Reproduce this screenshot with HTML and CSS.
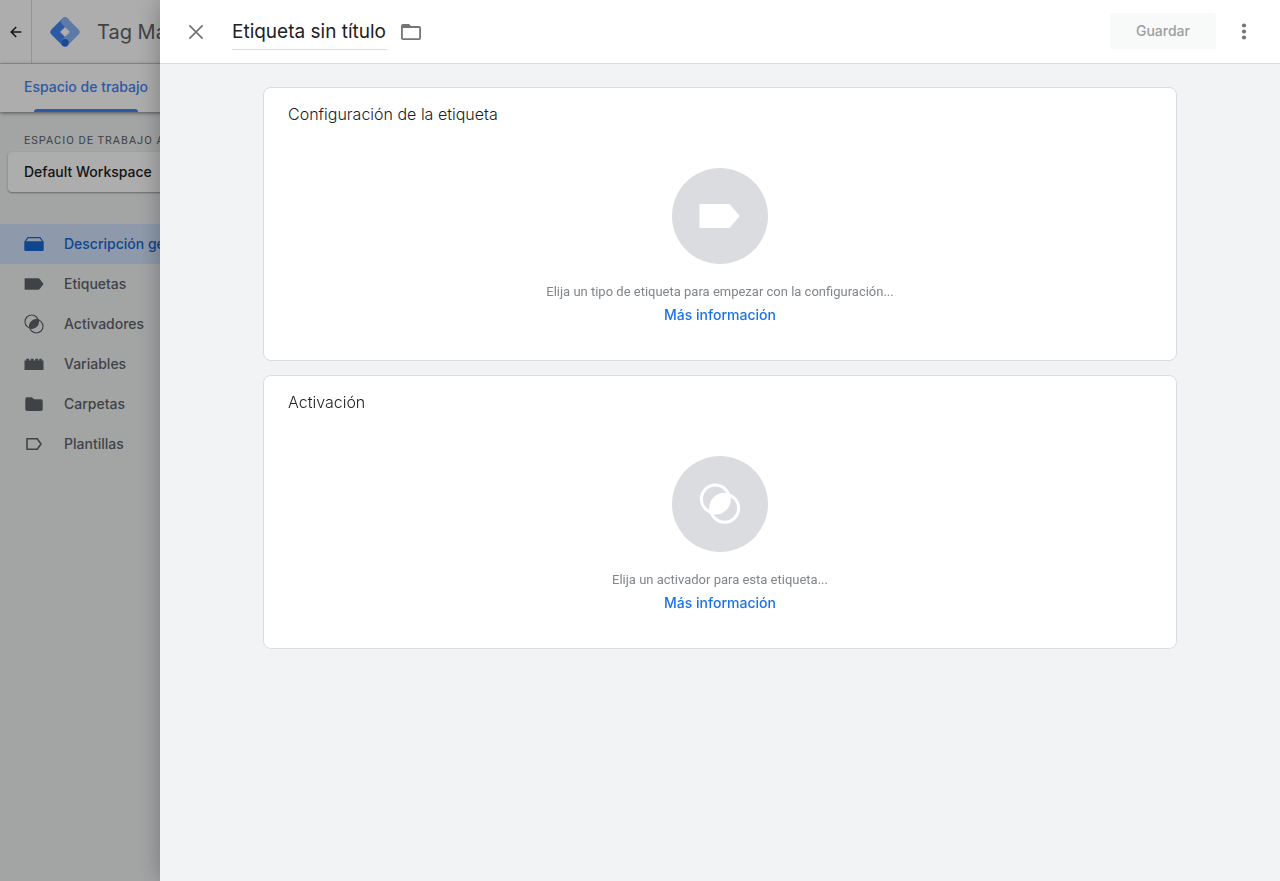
FILE: index.html
```html
<!DOCTYPE html>
<html lang="es">
<head>
<meta charset="utf-8">
<meta name="viewport" content="width=device-width, initial-scale=1">
<title>Tag Manager</title>
<link rel="stylesheet" href="styles.css">
</head>
<body>
<div class="app">
  <header class="app-header">
    <button class="back" type="button" aria-label="Atrás">
      <svg width="16" height="16" viewBox="0 0 24 24"><path fill="currentColor" d="M20 10.800H7.600l5.500-5.400L11.500 3.800 3.200 12l8.300 8.200 1.600-1.600-5.500-5.400H20z"/></svg>
    </button>
    <svg class="logo" width="30" height="30" viewBox="0 0 30 30" fill="none" stroke-width="8" stroke-linecap="round" stroke-linejoin="round" aria-hidden="true">
      <path d="M15 4.500 4.500 15 15 25.500" stroke="#4285f4"/>
      <path d="M15 4.500 25.500 15 15 25.500" stroke="#8ab4f8"/>
      <circle cx="15" cy="25.800" r="3.700" fill="#246fdb"/>
    </svg>
    <span class="product">Tag Manager</span>
  </header>
  <nav class="tabs" aria-label="Secciones"><a class="tab" href="#workspace">Espacio de trabajo</a></nav>
  <aside class="sidebar">
    <p class="label" id="ws-label">ESPACIO DE TRABAJO ACTUAL</p>
    <button class="workspace" type="button" aria-describedby="ws-label">Default Workspace</button>
    <nav class="menu" aria-label="Espacio de trabajo">
      <a class="item active" href="#overview">
        <svg class="icon" viewBox="0 0 20 20"><path fill="none" stroke="currentColor" stroke-width="1.200" d="M1.200 7.500 4 3.600h12l2.800 3.900"/><path fill="currentColor" d="M.3 7.200h19.400v8.600a1.200 1.200 0 0 1-1.200 1.200h-17A1.200 1.200 0 0 1 .3 15.800z"/></svg>
        <span>Descripción general</span></a>
      <a class="item" href="#tags">
        <svg class="icon" viewBox="0 0 20 20"><path fill="currentColor" d="M.6 4.200h13.800a1.500 1.500 0 0 1 1.100.5L19.500 10l-4 5.300a1.500 1.500 0 0 1-1.100.5H.6z"/></svg>
        <span>Etiquetas</span></a>
      <a class="item" href="#triggers">
        <svg class="icon" viewBox="0 0 20 20"><g fill="none" stroke="currentColor" stroke-width="1.200"><circle cx="7.700" cy="7.700" r="6.700"/><circle cx="12.300" cy="12.300" r="6.700"/></g><path fill="currentColor" d="M14.200 5.800A6.700 6.700 0 0 1 5.800 14.200 6.700 6.700 0 0 1 14.200 5.800z"/></svg>
        <span>Activadores</span></a>
      <a class="item" href="#variables">
        <svg class="icon" viewBox="0 0 20 20"><path fill="currentColor" d="M.5 6.500h1.700V4.700h3v1.800h1.500V4.700h3v1.800h1.500V4.700h3v1.800h1.100V4.700h2.500v1.800h1.700V16H.5z"/></svg>
        <span>Variables</span></a>
      <a class="item" href="#folders">
        <svg class="icon" viewBox="0 0 20 20"><path fill="currentColor" d="M3 3.200h5l2 2h7a1.700 1.700 0 0 1 1.700 1.700v8.400A1.700 1.700 0 0 1 17 17H3a1.700 1.700 0 0 1-1.700-1.700V4.900A1.700 1.700 0 0 1 3 3.200z"/></svg>
        <span>Carpetas</span></a>
      <a class="item" href="#templates">
        <svg class="icon" viewBox="0 0 20 20"><path fill="none" stroke="currentColor" stroke-width="1.600" stroke-linejoin="round" d="M3 4.800h10.200L17 10l-3.800 5.200H3z"/></svg>
        <span>Plantillas</span></a>
    </nav>
  </aside>
</div>
<div class="scrim"></div>
<main class="sheet" role="dialog" aria-label="Etiqueta sin título">
  <header class="sheet-header">
    <button class="icon-button" type="button" aria-label="Cerrar">
      <svg width="24" height="24" viewBox="0 0 24 24"><path fill="none" stroke="currentColor" stroke-width="1.700" d="m5.400 5.400 13.200 13.200m0-13.200L5.400 18.600"/></svg>
    </button>
    <input class="title" type="text" aria-label="Nombre de la etiqueta" value="Etiqueta sin título">
    <button class="folder" type="button" aria-label="Carpeta">
      <svg width="24" height="24" viewBox="0 0 24 24"><path fill="currentColor" fill-rule="evenodd" d="M4 4h6l2 2h8.200A1.900 1.900 0 0 1 22 7.900V18a2 2 0 0 1-2 2H4a2 2 0 0 1-2-2V6a2 2 0 0 1 2-2zm-.2 4v10.200h16.400V8z"/></svg>
    </button>
    <button class="save" type="button" disabled>Guardar</button>
    <button class="icon-button" type="button" aria-label="Más opciones">
      <svg width="24" height="24" viewBox="0 0 24 24" fill="currentColor"><circle cx="12" cy="5.500" r="2.100"/><circle cx="12" cy="11.500" r="2.100"/><circle cx="12" cy="17.500" r="2.100"/></svg>
    </button>
  </header>
  <div class="content">
    <section class="card">
      <h2 class="card-title">Configuración de la etiqueta</h2>
      <div class="empty">
        <span class="disc"><svg width="48" height="48" viewBox="0 0 48 48"><path fill="#fff" d="M3.500 12h30l10.300 12-10.300 12h-30z"/></svg></span>
        <p class="hint">Elija un tipo de etiqueta para empezar con la configuración...</p>
        <a class="more" href="#tag-help">Más información</a>
      </div>
    </section>
    <section class="card">
      <h2 class="card-title">Activación</h2>
      <div class="empty">
        <span class="disc"><svg width="48" height="48" viewBox="0 0 48 48"><g fill="none" stroke="#fff" stroke-width="3"><circle cx="19.400" cy="19" r="14"/><circle cx="28.600" cy="28.200" r="14"/></g><path fill="#fff" d="M33.300 14.700A14.200 14.200 0 0 1 14.700 32.500 14.200 14.200 0 0 1 33.300 14.700z"/></svg></span>
        <p class="hint">Elija un activador para esta etiqueta...</p>
        <a class="more" href="#trigger-help">Más información</a>
      </div>
    </section>
  </div>
</main>
</body>
</html>
```

FILE: styles.css
```css
* { box-sizing: border-box; }
body {
  margin: 0;
  font-family: Inter, Roboto, sans-serif;
  font-size: 14px;
  color: #202124;
  overflow: hidden;
}
button, input { font: inherit; color: inherit; border: 0; background: none; padding: 0; margin: 0; }
a { color: inherit; text-decoration: none; }
p, h2 { margin: 0; }
svg { display: block; flex: none; }

.app { min-height: 100vh; background: #f1f3f4; }
.app-header {
  display: flex;
  align-items: center;
  height: 64px;
  background: #fff;
  border-bottom: 1px solid #dadce0;
}
.back {
  display: grid;
  place-items: center;
  align-self: stretch;
  width: 32px;
  border-right: 1px solid #dadce0;
}
.logo { margin: 0 17px 0 18px; }
.product { font-size: 20px; color: #5f6368; }
.tabs {
  position: relative;
  display: flex;
  height: 48px;
  padding-left: 24px;
  background: #fff;
  box-shadow: 0 1px 4px rgba(0, 0, 0, .5);
}
.tab { position: relative; line-height: 46px; font-weight: 500; color: #4285f4; }
.tab::after {
  content: "";
  position: absolute;
  right: 10px;
  bottom: 0;
  left: 10px;
  height: 3px;
  border-radius: 3px 3px 0 0;
  background: #4285f4;
}
.sidebar { width: 288px; padding-top: 20px; }
.label {
  padding-left: 24px;
  font: 11px/18px Roboto, sans-serif;
  letter-spacing: 1px;
  color: #5f6368;
}
.workspace {
  display: block;
  width: 272px;
  height: 40px;
  margin: 2px 8px 32px;
  padding: 0 16px 2px;
  border-radius: 4px;
  background: #fff;
  box-shadow: 0 1px 2px rgba(60, 64, 67, .5);
  font-weight: 500;
  text-align: left;
}
.item {
  display: flex;
  align-items: center;
  gap: 20px;
  height: 40px;
  padding-left: 24px;
  font-weight: 500;
  color: #5f6368;
}
.item span { padding-bottom: 2px; }
.item.active { background: #d2e3fc; color: #1967d2; }
.icon { width: 20px; height: 20px; }

.scrim { position: fixed; inset: 0; background: rgba(0, 0, 0, .32); }
.sheet {
  position: fixed;
  inset: 0 0 0 160px;
  overflow: auto;
  background: #f1f3f4;
  box-shadow: 0 0 24px rgba(0, 0, 0, .3);
}
.sheet-header {
  display: flex;
  align-items: center;
  height: 64px;
  padding: 0 24px;
  background: #fff;
  border-bottom: 1px solid #dadce0;
}
.icon-button { color: #757575; }
.title {
  width: 155px;
  height: 36px;
  margin: 0 12px 0 24px;
  border-bottom: 1px solid #dadce0;
  font-size: 19px;
}
.folder { color: #757575; }
.save {
  width: 106px;
  height: 36px;
  margin: 0 16px 2px auto;
  border-radius: 4px;
  background: #f8f9f9;
  font-weight: 500;
  color: #9e9e9e;
}
.content {
  display: grid;
  gap: 14px;
  padding: 23px 103px;
}
.card {
  padding: 14px 24px 34px;
  border: 1px solid #dadce0;
  border-radius: 8px;
  background: #fff;
}
.card-title { font-size: 16px; line-height: 24px; font-weight: 300; }
.empty { display: flex; flex-direction: column; align-items: center; padding-top: 42px; }
.disc {
  display: grid;
  place-items: center;
  width: 96px;
  height: 96px;
  margin-bottom: 16px;
  border-radius: 50%;
  background: #dadce0;
}
.hint { font: 13px/24px Roboto, sans-serif; color: #80868b; text-align: center; }
.more { line-height: 22px; font-weight: 500; color: #1a73e8; }
```
